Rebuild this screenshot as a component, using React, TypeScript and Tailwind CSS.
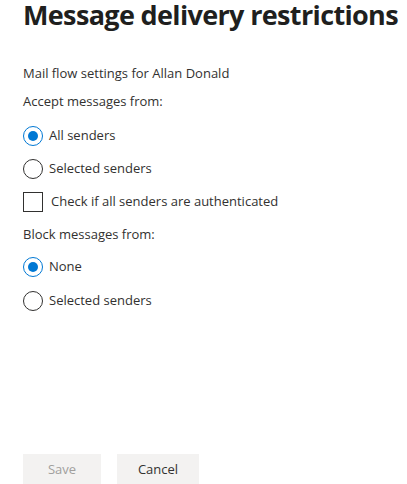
import { useState } from 'react'

const font = { fontFamily: '"Open Sans", "Noto Sans", sans-serif' }

function Radio({ checked, label, onClick }: { checked: boolean; label: string; onClick: () => void }) {
  return (
    <button type="button" onClick={onClick} className="flex items-center h-[20px] text-left">
      <span
        className={
          checked
            ? 'flex items-center justify-center w-[20px] h-[20px] rounded-full border border-[#0078d4] bg-white'
            : 'flex items-center justify-center w-[20px] h-[20px] rounded-full border border-[#323130] bg-white'
        }
      >
        {checked && <span className="w-[10px] h-[10px] rounded-full bg-[#0078d4]" />}
      </span>
      <span className="ml-[6px] text-[13px] text-[#323130]">{label}</span>
    </button>
  )
}

export default function App() {
  const [accept, setAccept] = useState('all')
  const [block, setBlock] = useState('none')
  const [auth, setAuth] = useState(false)

  return (
    <div style={font} className="w-[407px] h-[484px] overflow-hidden bg-white pl-[23px] flex flex-col">
      <h1 className="text-[27px] leading-[29px] font-bold tracking-[-0.65px] text-[#201f1e] whitespace-nowrap">
        Message delivery restrictions
      </h1>

      <p className="mt-[35px] text-[13px] leading-[18px] text-[#323130]">Mail flow settings for Allan Donald</p>
      <p className="mt-[10px] text-[13px] leading-[18px] text-[#323130]">Accept messages from:</p>

      <div className="mt-[16px] flex flex-col gap-[13px]">
        <Radio checked={accept === 'all'} label="All senders" onClick={() => setAccept('all')} />
        <Radio checked={accept === 'selected'} label="Selected senders" onClick={() => setAccept('selected')} />
        <button type="button" onClick={() => setAuth(v => !v)} className="flex items-center h-[20px] text-left">
          <span className="flex items-center justify-center w-[20px] h-[20px] border border-[#323130] bg-white">
            {auth && (
              <svg width="12" height="12" viewBox="0 0 12 12" fill="none" stroke="#323130" strokeWidth="1.2">
                <path d="M2 6.5l2.5 2.5L10 3" />
              </svg>
            )}
          </span>
          <span className="ml-[8px] text-[13px] text-[#323130]">Check if all senders are authenticated</span>
        </button>
      </div>

      <p className="mt-[13px] text-[13px] leading-[18px] text-[#323130]">Block messages from:</p>

      <div className="mt-[14px] flex flex-col gap-[14px]">
        <Radio checked={block === 'none'} label="None" onClick={() => setBlock('none')} />
        <Radio checked={block === 'selected'} label="Selected senders" onClick={() => setBlock('selected')} />
      </div>

      <div className="mt-auto flex gap-[16px] mb-[-2px]">
        <button type="button" disabled className="w-[78px] h-[32px] bg-[#f3f2f1] text-[13px] text-[#a19f9d]">
          Save
        </button>
        <button type="button" className="w-[82px] h-[32px] bg-[#f3f2f1] text-[13px] text-[#323130]">
          Cancel
        </button>
      </div>
    </div>
  )
}
